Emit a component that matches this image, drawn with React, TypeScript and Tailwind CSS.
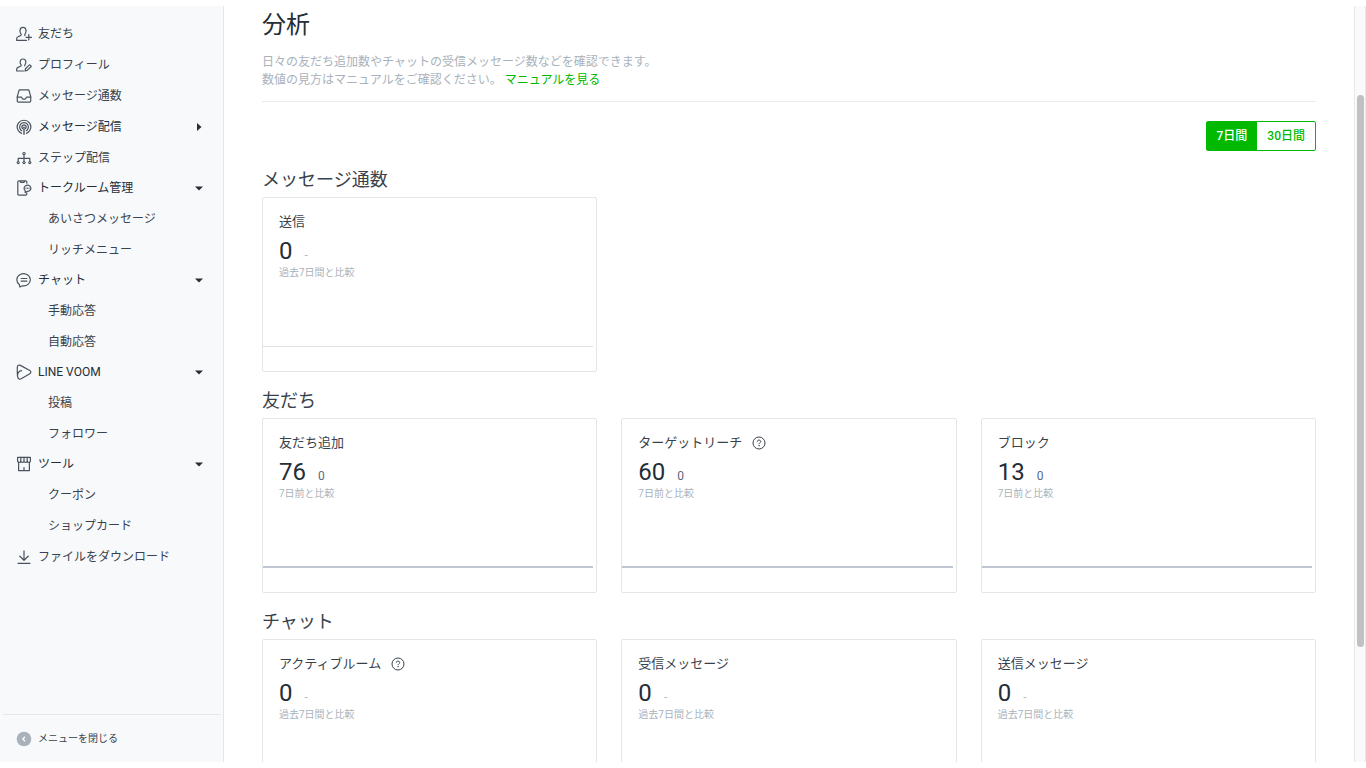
import { useState } from "react";
import type { ReactNode } from "react";
import clsx from "clsx";

interface MenuItem {
  label: string;
  icon: ReactNode;
  caret?: "right" | "down";
  children?: string[];
}

interface Stat {
  title: string;
  value: number;
  diff: string;
  note: string;
  help?: boolean;
}

function Icon({ children }: { children: ReactNode }) {
  return (
    <svg
      viewBox="0 0 16 16"
      className="w-4 h-4 shrink-0 text-[#4a535d]"
      fill="none"
      stroke="currentColor"
      strokeWidth="1.2"
      strokeLinecap="round"
      strokeLinejoin="round"
      aria-hidden="true"
    >
      {children}
    </svg>
  );
}

const menu: MenuItem[] = [
  {
    label: "友だち",
    icon: (
      <Icon>
        <path d="M9 9.600C8.400 9 8.600 8.400 9.100 7.800C9.900 6.800 10.200 5.600 10 4.200C9.800 2.400 8.600 1.400 7 1.400C5.400 1.400 4.200 2.400 4 4.200C3.800 5.600 4.100 6.800 4.900 7.800C5.500 8.700 5.300 9.200 4.500 9.600L2 10.700C1 11.100.7 11.700.7 12.600V14.400H10.400" />
        <path d="M12.800 8.600v5.400M10.100 11.300h5.400" />
      </Icon>
    ),
  },
  {
    label: "プロフィール",
    icon: (
      <Icon>
        <path d="M8.700 8.900C8.500 8.300 8.700 8 9.100 7.500C9.800 6.700 10 5.700 9.800 4.400C9.600 2.900 8.500 2 7 2C5.500 2 4.400 2.900 4.200 4.400C4 5.700 4.200 6.700 4.900 7.600C5.400 8.400 5.300 8.900 4.500 9.300L2 10.400C1 10.800.7 11.400.7 12.300V14H7.400" />
        <path d="M13.200 8.100c.6-.6 2.400 1 1.800 1.700l-3.800 3.600-2.200.6.500-2.300z" />
      </Icon>
    ),
  },
  {
    label: "メッセージ通数",
    icon: (
      <Icon>
        <path d="M3.200 1.900h9.600l1.900 6.500v4.600c0 .7-.4 1.100-1.100 1.100H2.400c-.7 0-1.100-.4-1.100-1.100V8.400z" />
        <path d="M1.300 9.200h4.200c.4 1.500 1.300 2.200 2.500 2.200s2.100-.7 2.500-2.200h4.200" />
      </Icon>
    ),
  },
  {
    label: "メッセージ配信",
    caret: "right",
    icon: (
      <Icon>
        <path d="M5.600 14.400a6.800 6.800 0 1 1 4.800 0" />
        <path d="M5.700 11.700a4.400 4.400 0 1 1 4.600 0" />
        <path d="M6.500 9.500a2.100 2.100 0 1 1 3 0" />
        <path d="M8 8.200v7" strokeWidth="1.400" />
      </Icon>
    ),
  },
  {
    label: "ステップ配信",
    icon: (
      <Icon>
        <g fill="currentColor" stroke="none">
          <circle cx="8" cy="3.600" r="1.700" />
          <circle cx="2.200" cy="12.600" r="1.600" />
          <circle cx="8" cy="12.600" r="1.600" />
          <circle cx="13.800" cy="12.600" r="1.600" />
        </g>
        <path d="M8 5v6.400M2.200 11.400V8.400h11.600v3" />
        <g fill="#f7f9fb" stroke="none">
          <circle cx="8" cy="3.600" r=".6" />
          <circle cx="2.200" cy="12.600" r=".5" />
          <circle cx="8" cy="12.600" r=".5" />
          <circle cx="13.800" cy="12.600" r=".5" />
        </g>
      </Icon>
    ),
  },
  {
    label: "トークルーム管理",
    caret: "down",
    children: ["あいさつメッセージ", "リッチメニュー"],
    icon: (
      <Icon>
        <path d="M10.800 3.200V2c0-.7-.4-1.100-1.100-1.100H2.900c-.7 0-1.100.4-1.100 1.100v12c0 .7.4 1.100 1.100 1.100h6.800c.7 0 1.100-.4 1.100-1.100v-.6" />
        <path d="M4.200 1.200l.5 1.200h3.200l.5-1.200" />
        <path d="M9.200 10.600a3.400 3.100 0 1 1 2.400.8l-2.400 1.200z" fill="#f7f9fb" />
        <path d="M10 8.200h.1M11.500 8.200h.1M13 8.200h.1" />
      </Icon>
    ),
  },
  {
    label: "チャット",
    caret: "down",
    children: ["手動応答", "自動応答"],
    icon: (
      <Icon>
        <path d="M3.300 12.500A6.700 6.100 0 1 1 6.400 13.800L3.900 15z" />
        <path d="M5.100 6.500h5.800M5.100 9.100h5.800" />
      </Icon>
    ),
  },
  {
    label: "LINE VOOM",
    caret: "down",
    children: ["投稿", "フォロワー"],
    icon: (
      <Icon>
        <path d="M1.300 10.300V3.200C1.300 1.400 2.900.6 4.400 1.400L13.800 6.500C15.200 7.300 15.200 8.900 13.800 9.700L5.200 14.700C3.600 15.500 2.100 14.800 1.700 13.100C1 9.800 2.300 7.200 5.600 6.700" />
      </Icon>
    ),
  },
  {
    label: "ツール",
    caret: "down",
    children: ["クーポン", "ショップカード"],
    icon: (
      <Icon>
        <path d="M1.600 1.400h12.800v3.800c0 .8-.6 1.100-1.600 1.100s-1.600-.4-1.600-1.100c0 .7-.6 1.100-1.600 1.100S8 5.900 8 5.200c0 .7-.6 1.100-1.600 1.100s-1.600-.4-1.600-1.100c0 .7-.6 1.100-1.600 1.100s-1.600-.3-1.600-1.100z" />
        <path d="M4.800 1.400v3.800M8 1.400v3.800M11.200 1.400v3.800M2.600 6.400v8.200h10.800V6.400M8 11.600v3" />
      </Icon>
    ),
  },
  {
    label: "ファイルをダウンロード",
    icon: (
      <Icon>
        <path d="M8 1.800v9.400M3.800 7.200L8 11.300l4.200-4.100M2 14.300h12" />
      </Icon>
    ),
  },
];

const pastNote = "過去7日間と比較";
const agoNote = "7日前と比較";

const sections: { heading: string; stats: Stat[] }[] = [
  {
    heading: "メッセージ通数",
    stats: [{ title: "送信", value: 0, diff: "-", note: pastNote }],
  },
  {
    heading: "友だち",
    stats: [
      { title: "友だち追加", value: 76, diff: "0", note: agoNote },
      { title: "ターゲットリーチ", value: 60, diff: "0", note: agoNote, help: true },
      { title: "ブロック", value: 13, diff: "0", note: agoNote },
    ],
  },
  {
    heading: "チャット",
    stats: [
      { title: "アクティブルーム", value: 0, diff: "-", note: pastNote, help: true },
      { title: "受信メッセージ", value: 0, diff: "-", note: pastNote },
      { title: "送信メッセージ", value: 0, diff: "-", note: pastNote },
    ],
  },
];

function Caret({ direction }: { direction: "right" | "down" }) {
  return (
    <svg viewBox="0 0 8 8" className="w-2 h-2 ml-auto" fill="#252d36" aria-hidden="true">
      {direction === "right" ? <path d="M2 0l4.500 4L2 8z" /> : <path d="M0 2.500h8L4 6.500z" />}
    </svg>
  );
}

function Sidebar() {
  return (
    <aside className="w-56 shrink-0 flex flex-col bg-[#f7f9fb] border-r border-[#e4e7ea]">
      <nav className="flex-1 min-h-0 overflow-hidden pt-3">
        <ul>
          {menu.map((item) => (
            <li key={item.label}>
              {item.caret ? (
                <button
                  type="button"
                  aria-expanded={item.caret === "down"}
                  className={clsx(
                    "w-full flex items-center gap-1.5 pl-4 pr-5 text-[#252d36]",
                    item.children ? "h-[30px]" : "h-[31px]",
                  )}
                >
                  {item.icon}
                  {item.label}
                  <Caret direction={item.caret} />
                </button>
              ) : (
                <a href="#" className="h-[31px] flex items-center gap-1.5 pl-4">
                  {item.icon}
                  {item.label}
                </a>
              )}
              {item.children && (
                <ul>
                  {item.children.map((child) => (
                    <li key={child}>
                      <a href="#" className="h-[31px] flex items-center pl-12">
                        {child}
                      </a>
                    </li>
                  ))}
                </ul>
              )}
            </li>
          ))}
        </ul>
      </nav>
      <div className="mx-[3px] border-t border-[#e4e7ea]">
        <button type="button" className="h-[47px] flex items-center gap-1.5 pl-[13px] text-[10px]">
          <svg viewBox="0 0 16 16" className="w-4 h-4" aria-hidden="true">
            <circle cx="8" cy="8" r="7.300" fill="#a9b2bb" />
            <path d="M9 5.700L6.800 8L9 10.300" fill="none" stroke="#fff" strokeWidth="1.300" />
          </svg>
          メニューを閉じる
        </button>
      </div>
    </aside>
  );
}

function StatCard({ stat }: { stat: Stat }) {
  const hasData = stat.diff !== "-";

  return (
    <article className="border border-[#e4e5e7] rounded-xs pt-3.5 pb-6">
      <div className="px-4">
        <h3 className="flex items-center gap-2.5 text-[13px] leading-5">
          {stat.title}
          {stat.help && (
            <button type="button" aria-label={`${stat.title}のヘルプ`}>
              <svg
                viewBox="0 0 14 14"
                className="w-3.5 h-3.5"
                fill="none"
                stroke="currentColor"
                aria-hidden="true"
              >
                <circle cx="7" cy="7" r="6" />
                <path d="M5.300 5.700c0-1 .7-1.600 1.700-1.600s1.700.6 1.700 1.500c0 1.100-1.600 1.200-1.600 2.500" />
                <path d="M7.100 9.100v1.200" strokeWidth="1.200" />
              </svg>
            </button>
          )}
        </h3>
        <p className="mt-[5px] h-7 flex items-baseline gap-3">
          <span className="text-2xl leading-7 text-[#252d36]">{stat.value}</span>
          <span className={clsx("leading-4", hasData ? "text-[#5b6784]" : "text-[#b7bec6]")}>
            {stat.diff}
          </span>
        </p>
        <p className="text-[10px] leading-4 text-[#a9b2bb]">{stat.note}</p>
      </div>
      <div
        className={clsx(
          "h-[66px] mr-[3px]",
          hasData ? "border-b-2 border-[#bfc5d1]" : "border-b border-[#dfe1e4]",
        )}
      />
    </article>
  );
}

export default function App() {
  const [days, setDays] = useState(7);

  return (
    <div className="h-screen py-1.5 flex bg-white overflow-hidden text-xs text-[#39424c] font-[Roboto,'Noto_Sans_CJK_JP',sans-serif]">
      <Sidebar />
      <main className="flex-1 min-w-0 overflow-hidden px-[38px] pt-px">
        <header className="border-b border-[#e9ebed] pb-3">
          <h1 className="text-2xl leading-9 text-[#252d36]">分析</h1>
          <p className="mt-2.5 leading-[18px] text-[#a9b2bb]">
            日々の友だち追加数やチャットの受信メッセージ数などを確認できます。
            <br />
            数値の見方はマニュアルをご確認ください。{" "}
            <a href="#" className="text-[#00b900]">
              マニュアルを見る
            </a>
          </p>
        </header>
        <div className="mt-[19px] flex justify-end">
          <div className="flex h-[30px] border border-[#00b900] rounded-xs">
            {[7, 30].map((n) => (
              <button
                key={n}
                type="button"
                aria-pressed={days === n}
                onClick={() => setDays(n)}
                className={clsx(
                  "px-2.5 font-medium",
                  days === n ? "bg-[#00b900] text-white" : "text-[#00b900]",
                )}
              >
                {n}日間
              </button>
            ))}
          </div>
        </div>
        <div className="mt-4 flex flex-col gap-4">
          {sections.map((section) => (
            <section key={section.heading}>
              <h2 className="mb-1 text-lg leading-[26px]">{section.heading}</h2>
              <div className="grid grid-cols-3 gap-6">
                {section.stats.map((stat) => (
                  <StatCard key={stat.title} stat={stat} />
                ))}
              </div>
            </section>
          ))}
        </div>
      </main>
      <div className="w-3 shrink-0 flex flex-col items-center bg-[#fafafa] border-x border-[#e8e8e8]">
        <div className="h-[89px]" />
        <div className="h-[73%] w-[7px] rounded-full bg-[#c1c1c1]" />
      </div>
    </div>
  );
}
